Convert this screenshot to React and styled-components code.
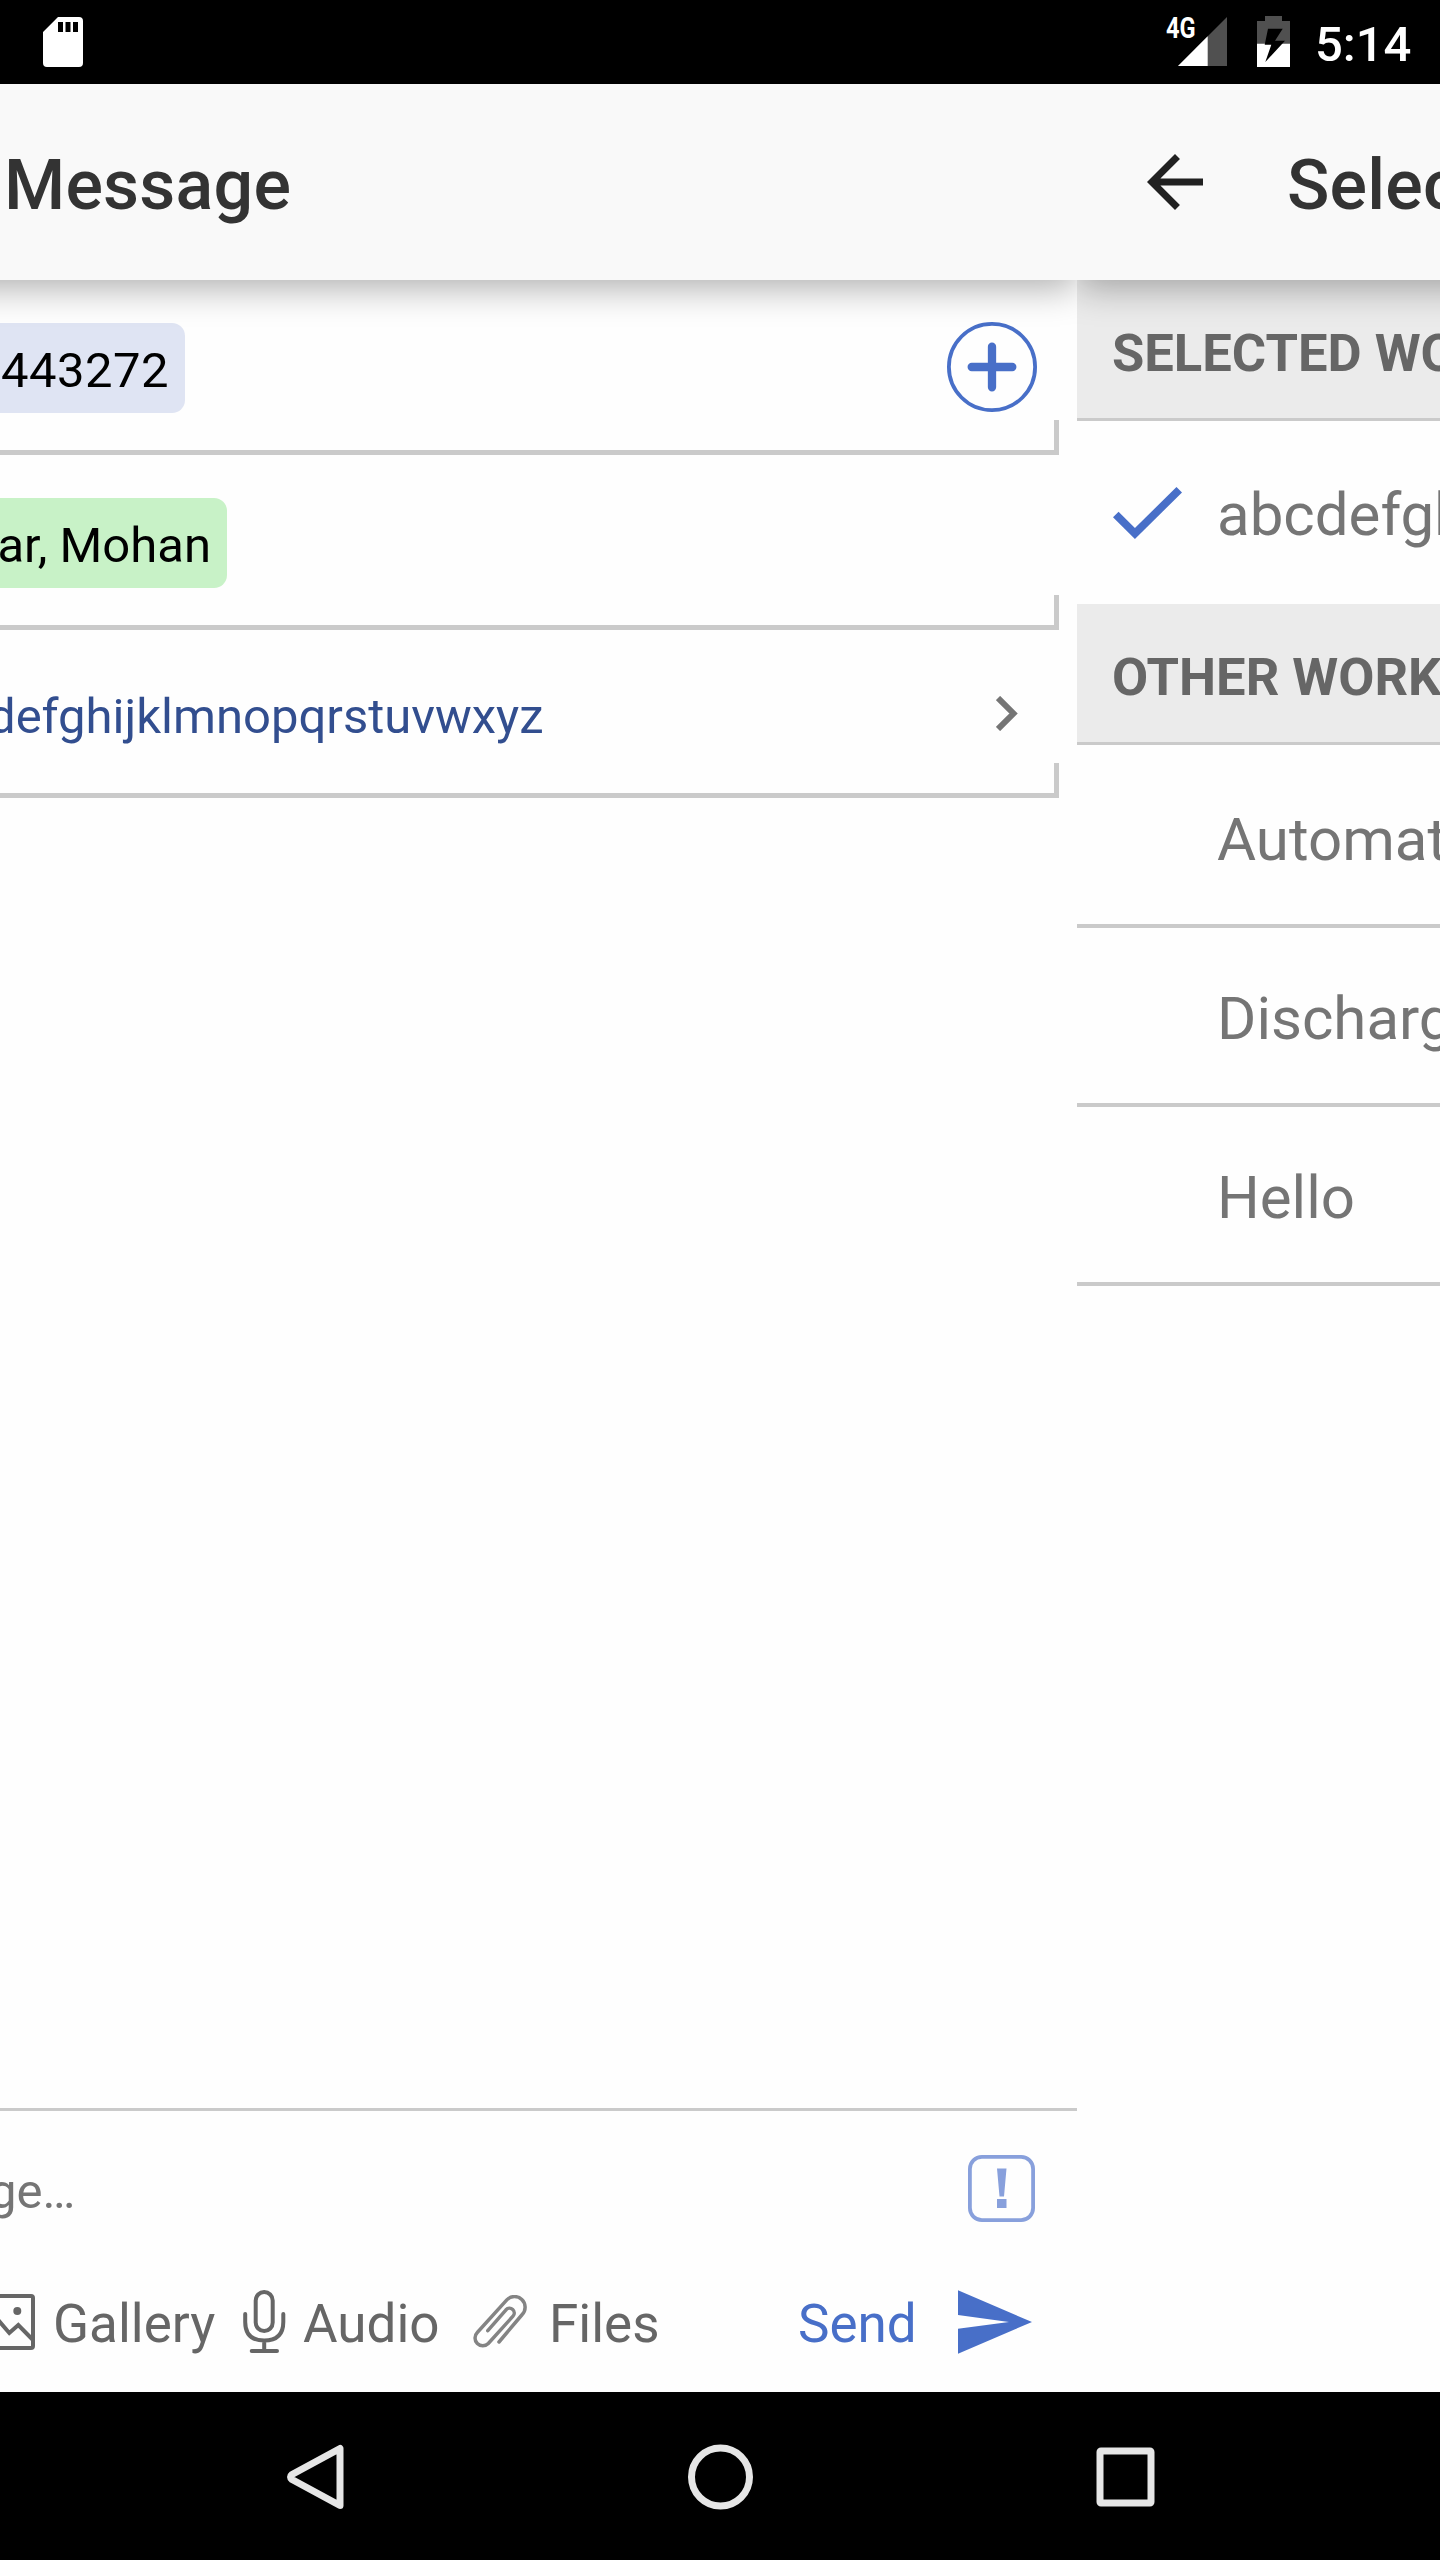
import React from "react";
import styled, { createGlobalStyle } from "styled-components";

const Global = createGlobalStyle`
  * { box-sizing: border-box; }
  body { margin: 0; background: #fff; }
  svg { display: block; flex: none; }
`;

const Screen = styled.div`
  width: 1440px;
  height: 2560px;
  overflow: hidden;
  display: flex;
  flex-direction: column;
  background: #fefefe;
  font-family: Roboto, sans-serif;
  white-space: nowrap;
`;

const StatusBar = styled.header`
  height: 84px;
  flex: none;
  display: flex;
  align-items: flex-start;
  padding: 16px 0 0 43px;
  background: #000;
  color: #fff;
`;
const StatusIcons = styled.div`
  display: flex;
  align-items: flex-start;
  margin-left: auto;
  width: 274px;
`;
const Network = styled.span`
  width: 12px;
  font-size: 29.5px;
  line-height: 34px;
  font-weight: 700;
  transform: scaleX(0.8);
  transform-origin: left;
  margin-top: -5px;
`;
const BatterySlot = styled.span`
  margin-left: 30px;
`;
const Clock = styled.span`
  margin-left: 25px;
  font-size: 49px;
  line-height: 57px;
  font-weight: 500;
`;

const Pages = styled.main`
  flex: 1;
  min-height: 0;
  display: flex;
`;
const Page = styled.section`
  width: ${(p) => p.$width}px;
  flex: none;
  display: flex;
  flex-direction: column;
  overflow: hidden;
`;
const TitleBar = styled.div`
  position: relative;
  height: 196px;
  flex: none;
  display: flex;
  align-items: center;
  margin: 0 ${(p) => p.$bleedRight || 0}px 0 ${(p) => -(p.$bleedLeft || 0)}px;
  padding-left: ${(p) => p.$inset + (p.$bleedLeft || 0)}px;
  background: #f9f9f9;
  box-shadow: 0 7px 35px rgba(0, 0, 0, 0.33);
`;
const Title = styled.h1`
  margin: 6px 0 0 ${(p) => p.$gap || 0}px;
  font-size: 70px;
  line-height: 82px;
  font-weight: 500;
  letter-spacing: 0.2px;
  color: #333;
`;

const Field = styled.div`
  height: ${(p) => p.$height}px;
  width: 1059px;
  flex: none;
  display: flex;
  align-items: flex-start;
  justify-content: space-between;
  padding-top: 43px;
  padding-right: 22px;
  border-bottom: 5px solid #cacaca;
  background: linear-gradient(#cacaca, #cacaca) right bottom / 5px 30px no-repeat;
`;
const Chip = styled.span`
  width: ${(p) => p.$width}px;
  height: 90px;
  padding-right: 16px;
  border-radius: 0 13px 13px 0;
  background: ${(p) => p.$color};
  color: #000;
  font-size: 49px;
  line-height: 96px;
  letter-spacing: ${(p) => p.$tracking}px;
  display: flex;
  justify-content: flex-end;
`;
const Workflow = styled.span`
  margin: 15px 0 0 ${(p) => p.$start}px;
  font-size: 49px;
  line-height: 58px;
  color: #324e8f;
`;
const IconSlot = styled.span`
  margin: ${(p) => p.$margin};
`;

const Composer = styled.div`
  height: 284px;
  flex: none;
  margin-top: auto;
  border-top: 3px solid #cacaca;
`;
const InputRow = styled.div`
  height: 156px;
  display: flex;
  align-items: flex-start;
  justify-content: space-between;
  padding: 44px 42px 0 0;
`;
const Placeholder = styled.span`
  margin: 8px 0 0 ${(p) => p.$start}px;
  font-size: 49px;
  line-height: 58px;
  color: #757575;
`;
const Actions = styled.div`
  height: 109px;
  display: flex;
  align-items: center;
`;
const Action = styled.span`
  margin: 5px 0 0 ${(p) => p.$gap}px;
  width: ${(p) => p.$width}px;
  font-size: 53px;
  line-height: 62px;
  color: ${(p) => p.$color || "#666"};
`;

const GroupHeader = styled.div`
  height: 141px;
  flex: none;
  padding: 42px 0 0 35px;
  border-bottom: 3px solid #cacaca;
  background: #ebebeb;
  color: #666;
  font-size: 52.5px;
  line-height: 63px;
  font-weight: 700;
`;
const Option = styled.div`
  height: ${(p) => p.$height}px;
  flex: none;
  display: flex;
  padding-top: ${(p) => p.$top}px;
  border-bottom: ${(p) => (p.$plain ? 0 : 4)}px solid #cacaca;
  color: #757575;
  font-size: 60px;
  line-height: 70px;
`;
const CheckSlot = styled.span`
  width: 140px;
  flex: none;
  padding: 7px 0 0 36px;
`;

const NavBar = styled.nav`
  height: 168px;
  flex: none;
  display: flex;
  align-items: center;
  justify-content: space-between;
  padding: 1px 284px 0;
  background: #000;
`;

const SdCard = () => (
  <svg width="40" height="52" viewBox="0 0 40 52">
    <path fill="#fff" fillRule="evenodd" d="M15 1H36Q40 1 40 5V47Q40 51 36 51H4Q0 51 0 47V16ZM15 6V16H20V6ZM22.500 6V16H27.500V6ZM30 6V16H35V6Z" />
  </svg>
);
const Signal = () => (
  <svg width="49" height="51" viewBox="0 0 49 51">
    <path fill="#505050" d="M49 1V50H0Z" />
    <path fill="#fff" d="M0 50L29.700 20.300V50Z" />
  </svg>
);
const Battery = () => (
  <svg width="33" height="51" viewBox="0 0 33 51">
    <path fill="#505050" d="M8 0H25V5H33V51H0V5H8Z" />
    <path fill="#fff" d="M0 27.700H33V51H0Z" />
    <path fill="#000" d="M11 12.700H25.700L18 24.700H28L8.300 46L14.300 28.700H7.700Z" />
  </svg>
);
const BackArrow = () => (
  <svg width="84" height="84" viewBox="0 0 24 24">
    <path fill="#212121" d="M20 11H7.830l5.590-5.590L12 4l-8 8 8 8 1.410-1.410L7.830 13H20v-2z" />
  </svg>
);
const AddCircle = () => (
  <svg width="90" height="90" viewBox="0 0 90 90" fill="none" stroke="#486fc8">
    <circle cx="45" cy="45" r="43.100" strokeWidth="3.800" />
    <path d="M45 24.700V65.300M24.700 45H65.300" strokeWidth="8.300" strokeLinecap="round" />
  </svg>
);
const Chevron = () => (
  <svg width="22" height="35" viewBox="0 0 22 35" fill="none" stroke="#757575">
    <path d="M2 2L17.500 17.500L2 33" strokeWidth="6" />
  </svg>
);
const Check = () => (
  <svg width="69" height="52" viewBox="3.410 5.590 17.590 13.410" preserveAspectRatio="none">
    <path fill="#486fc8" d="M9 16.170L4.830 12l-1.420 1.410L9 19 21 7l-1.410-1.410z" />
  </svg>
);
const Urgent = () => (
  <svg width="67" height="67" viewBox="0 0 67 67">
    <rect x="1.900" y="1.900" width="63.200" height="63.200" rx="12" fill="none" stroke="#88a0dc" strokeWidth="3.800" />
    <path fill="#88a0dc" d="M29 13.500H38.500L36 41.500H31.500ZM29 44H38.500V53H29Z" />
  </svg>
);
const Picture = () => (
  <svg width="35" height="56" viewBox="0 0 35 56" fill="none" stroke="#666" strokeWidth="4">
    <rect x="-22" y="2" width="55" height="52" rx="2" />
    <circle cx="17.300" cy="17" r="4" fill="#666" stroke="none" />
    <path d="M-6 21L9.300 39L18.300 31L33 46" />
  </svg>
);
const Mic = () => (
  <svg width="43" height="63" viewBox="0 0 43 63" fill="none" stroke="#666" strokeWidth="4" strokeLinecap="round">
    <rect x="12.700" y="2" width="17" height="39" rx="8.500" />
    <path d="M2.200 24V32Q2.200 50.500 21.200 50.500Q40.300 50.500 40.300 32V24M21.200 50.500V61M8.700 61H34" />
  </svg>
);
const Clip = () => (
  <svg width="54" height="53" viewBox="0 0 54 53" fill="none" stroke="#848484" strokeWidth="3.500" strokeLinecap="round">
    <path d="M26 47L49.200 19.500A10.300 10.300 0 0 0 33.800 4.900L4.300 37.500A7.600 7.600 0 0 0 15.300 48.500L40 21.200A4.700 4.700 0 0 0 33 14.800L14.800 35.700" />
  </svg>
);
const SendIcon = () => (
  <svg width="74" height="64" viewBox="0 0 74 64">
    <path fill="#486fc8" d="M0 0.300L74 32L0 63.700V38.700L51 32L0 25Z" />
  </svg>
);
const NavBack = () => (
  <svg width="60" height="66" viewBox="0 0 60 66">
    <path d="M56 4.500V61.500L8 35.500Q5 33 8 30.500Z" fill="none" stroke="#e6e6e6" strokeWidth="7" strokeLinejoin="round" />
  </svg>
);
const NavHome = () => (
  <svg width="66" height="66" viewBox="0 0 66 66">
    <circle cx="33.500" cy="33" r="29" fill="none" stroke="#e6e6e6" strokeWidth="7" />
  </svg>
);
const NavRecent = () => (
  <svg width="60" height="60" viewBox="0 0 60 60">
    <rect x="4" y="4" width="51" height="52" rx="1" fill="none" stroke="#e6e6e6" strokeWidth="7" strokeLinejoin="round" />
  </svg>
);

const options = [
  { label: "Automat", height: 183, top: 60 },
  { label: "Discharg", height: 179, top: 56 },
  { label: "Hello", height: 179, top: 56 },
];

export default function App() {
  return (
    <Screen>
      <Global />
      <StatusBar>
        <SdCard />
        <StatusIcons>
          <Network>4G</Network>
          <Signal />
          <BatterySlot><Battery /></BatterySlot>
          <Clock>5:14</Clock>
        </StatusIcons>
      </StatusBar>
      <Pages>
        <Page $width={1077}>
          <TitleBar $inset={4} $bleedLeft={120}>
            <Title>Message</Title>
          </TitleBar>
          <Field $height={175}>
            <Chip $width={185} $tracking={0.45} $color="#dfe4f3">443272</Chip>
            <IconSlot $margin="-1px 0 0"><AddCircle /></IconSlot>
          </Field>
          <Field $height={175}>
            <Chip $width={227} $tracking={0} $color="#c8f2c7">ar, Mohan</Chip>
          </Field>
          <Field $height={168}>
            <Workflow $start={-12}>defghijklmnopqrstuvwxyz</Workflow>
            <IconSlot $margin="23px 19px 0 0"><Chevron /></IconSlot>
          </Field>
          <Composer>
            <InputRow>
              <Placeholder $start={-11}>ge…</Placeholder>
              <Urgent />
            </InputRow>
            <Actions>
              <Picture />
              <Action $gap={18} $width={190}>Gallery</Action>
              <Mic />
              <Action $gap={17} $width={170}>Audio</Action>
              <Clip />
              <Action $gap={22} $width={249}>Files</Action>
              <Action $gap={0} $width={160} $color="#486fc8">Send</Action>
              <SendIcon />
            </Actions>
          </Composer>
        </Page>
        <Page $width={363}>
          <TitleBar $inset={56} $bleedRight={-120}>
            <BackArrow />
            <Title $gap={70}>Selec</Title>
          </TitleBar>
          <GroupHeader>SELECTED WO</GroupHeader>
          <Option $height={183} $top={59} $plain>
            <CheckSlot><Check /></CheckSlot>
            abcdefgh
          </Option>
          <GroupHeader>OTHER WORK</GroupHeader>
          {options.map((o) => (
            <Option key={o.label} $height={o.height} $top={o.top}>
              <CheckSlot />
              {o.label}
            </Option>
          ))}
        </Page>
      </Pages>
      <NavBar>
        <NavBack />
        <NavHome />
        <NavRecent />
      </NavBar>
    </Screen>
  );
}
